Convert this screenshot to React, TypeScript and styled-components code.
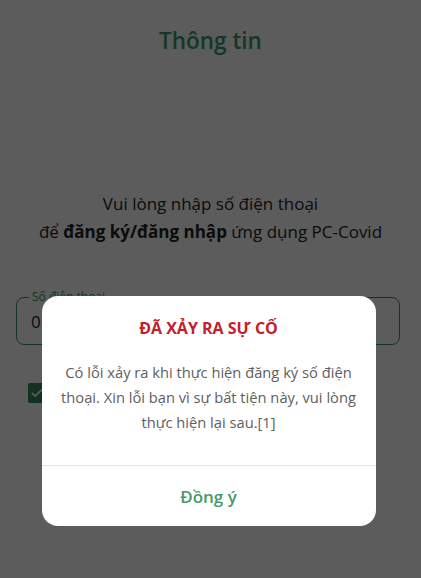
import styled, { createGlobalStyle } from 'styled-components';

const GlobalStyle = createGlobalStyle`
  html, body {
    margin: 0;
    padding: 0;
    background: #ffffff;
    font-family: 'Open Sans', 'Noto Sans', sans-serif;
  }
`;

const Screen = styled.div`
  width: 421px;
  height: 578px;
  position: relative;
  overflow: hidden;
  background: #ffffff;
  display: flex;
  flex-direction: column;
`;

const Title = styled.h1`
  margin: 25px 0 0;
  text-align: center;
  font-size: 22.5px;
  font-weight: 600;
  color: #3a9868;
  line-height: 32px;
`;

const Intro = styled.p`
  margin: 133px 0 0;
  text-align: center;
  font-size: 17px;
  line-height: 28px;
  color: #222222;
  b {
    font-weight: 700;
  }
`;

const Field = styled.div`
  position: relative;
  margin: 51px 21px 0 16px;
  height: 48px;
  box-sizing: border-box;
  border: 1.5px solid #3a9465;
  border-radius: 8px;
  padding: 0 14px;
  display: flex;
  align-items: center;
  font-size: 17px;
  color: #222;
`;

const FieldLabel = styled.span`
  position: absolute;
  top: -9px;
  left: 12px;
  padding: 0 3px;
  background: #ffffff;
  font-size: 12px;
  line-height: 16px;
  color: #3a9465;
`;

const CheckRow = styled.div`
  margin: 38px 0 0 28px;
  display: flex;
  align-items: center;
  gap: 10px;
`;

const CheckBox = styled.div`
  width: 18px;
  height: 20px;
  border-radius: 2px;
  background: #2f8a57;
  display: flex;
  align-items: center;
  justify-content: center;
`;

const Overlay = styled.div`
  position: absolute;
  inset: 0;
  background: rgba(0, 0, 0, 0.64);
  display: flex;
  justify-content: center;
  align-items: flex-start;
  padding-top: 296px;
  box-sizing: border-box;
`;

const Dialog = styled.div`
  width: 334px;
  margin-left: -4px;
  background: #ffffff;
  border-radius: 16px;
  overflow: hidden;
  display: flex;
  flex-direction: column;
`;

const DialogTitle = styled.h2`
  margin: 20px 0 0;
  text-align: center;
  font-size: 16px;
  font-weight: 700;
  color: #c4202b;
  line-height: 24px;
`;

const DialogBody = styled.p`
  margin: 20px 14px 0;
  text-align: center;
  font-size: 14.7px;
  line-height: 25px;
  color: #606060;
`;

const Divider = styled.div`
  height: 1px;
  background: #e4e4e4;
  margin-top: 30px;
`;

const DialogButton = styled.button`
  border: none;
  background: transparent;
  height: 60px;
  font-family: inherit;
  font-size: 17px;
  font-weight: 600;
  color: #469a6b;
  cursor: pointer;
`;

export default function App() {
  return (
    <>
      <GlobalStyle />
      <Screen>
        <Title>Thông tin</Title>
        <Intro>
          Vui lòng nhập số điện thoại
          <br />
          để <b>đăng ký/đăng nhập</b> ứng dụng PC-Covid
        </Intro>
        <Field>
          <FieldLabel>Số điện thoại</FieldLabel>
          0
        </Field>
        <CheckRow>
          <CheckBox>
            <svg width="14" height="14" viewBox="0 0 24 24" fill="none" stroke="#fff" strokeWidth="3" strokeLinecap="round" strokeLinejoin="round">
              <path d="M4 12.5l5 5L20 6.5" />
            </svg>
          </CheckBox>
        </CheckRow>
        <Overlay>
          <Dialog>
            <DialogTitle>ĐÃ XẢY RA SỰ CỐ</DialogTitle>
            <DialogBody>
              Có lỗi xảy ra khi thực hiện đăng ký số điện thoại. Xin lỗi bạn vì sự bất tiện này, vui lòng thực hiện lại sau.[1]
            </DialogBody>
            <Divider />
            <DialogButton>Đồng ý</DialogButton>
          </Dialog>
        </Overlay>
      </Screen>
    </>
  );
}
